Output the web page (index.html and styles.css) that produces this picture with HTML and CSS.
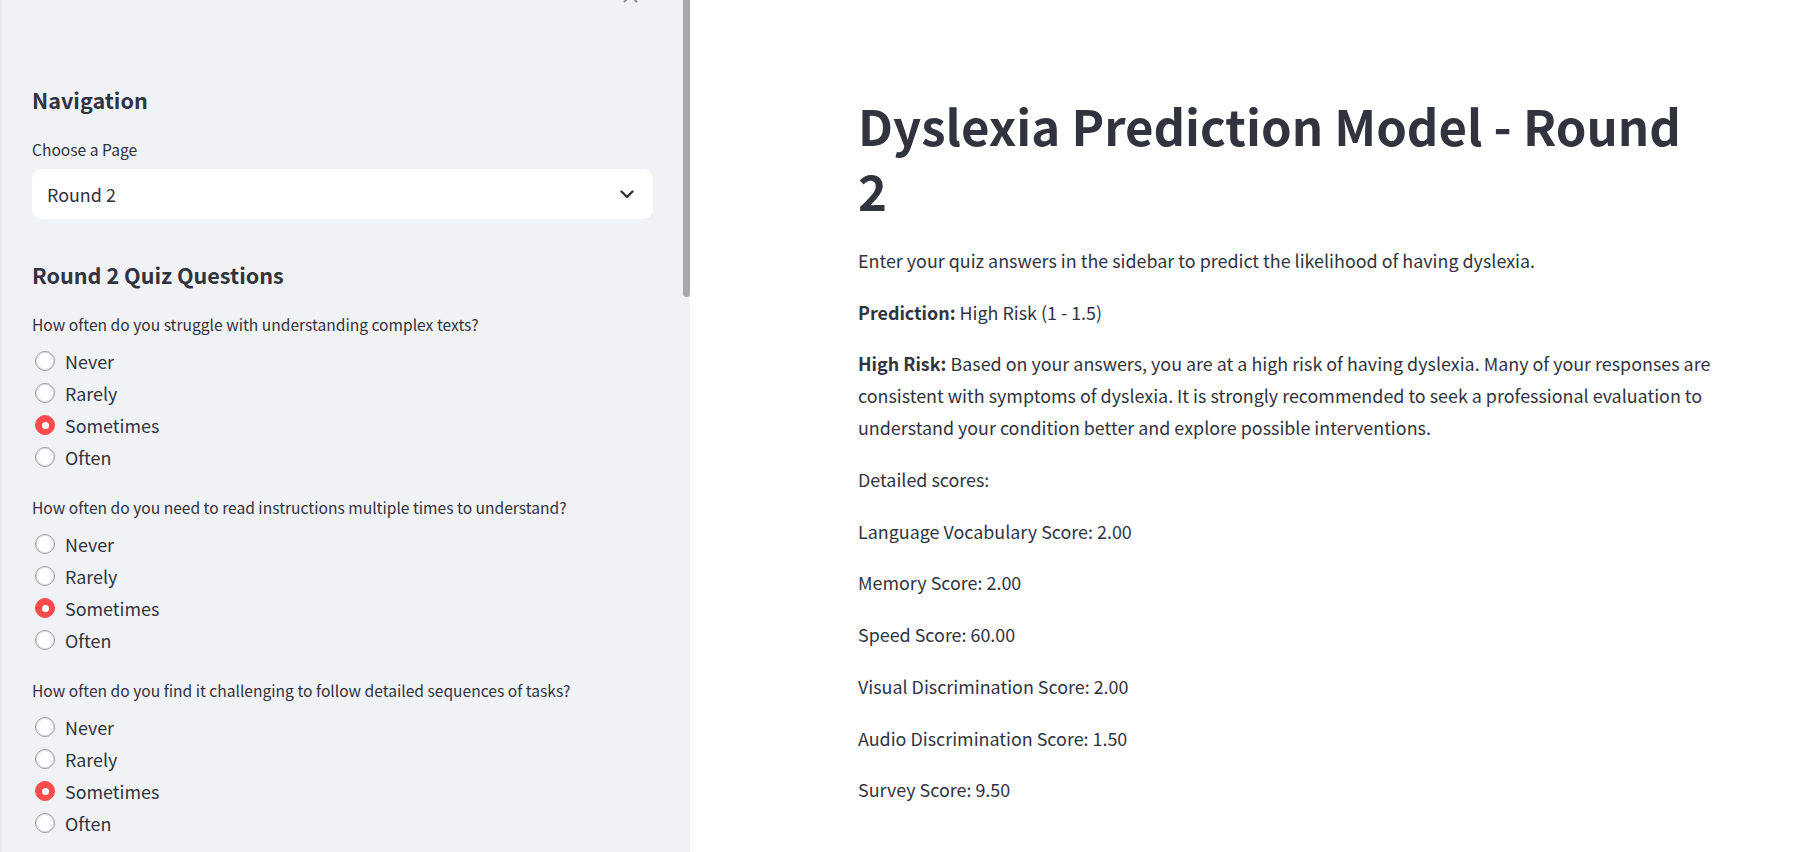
FILE: index.html
```html
<!DOCTYPE html>
<html lang="en">
<head>
<meta charset="utf-8">
<title>Dyslexia Prediction Model - Round 2</title>
<link rel="stylesheet" href="styles.css">
</head>
<body>
<div class="app">
  <aside class="sidebar">
    <svg class="close-icon" width="15" height="15" viewBox="0 0 15 15"><path d="M1.5 1.5 L13.5 13.5 M13.5 1.5 L1.5 13.5" stroke="#8e9099" stroke-width="2" stroke-linecap="round" fill="none"/></svg>
    <div class="scrollbar"></div>
    <div class="side-inner">
      <h2 class="side-heading">Navigation</h2>
      <div class="widget-label label-first">Choose a Page</div>
      <div class="select">
        <span class="select-value">Round 2</span>
        <svg class="chevron" width="14" height="9" viewBox="0 0 14 9"><path d="M1.5 1.5 L7 7 L12.5 1.5" stroke="#31333f" stroke-width="2.4" stroke-linecap="round" stroke-linejoin="round" fill="none"/></svg>
      </div>
      <h2 class="side-heading heading-quiz">Round 2 Quiz Questions</h2>

      <div class="question">
        <div class="widget-label">How often do you struggle with understanding complex texts?</div>
        <div class="radio-group">
          <div class="radio"><span class="dot"></span><span>Never</span></div>
          <div class="radio"><span class="dot"></span><span>Rarely</span></div>
          <div class="radio"><span class="dot checked"></span><span>Sometimes</span></div>
          <div class="radio"><span class="dot"></span><span>Often</span></div>
        </div>
      </div>

      <div class="question">
        <div class="widget-label">How often do you need to read instructions multiple times to understand?</div>
        <div class="radio-group">
          <div class="radio"><span class="dot"></span><span>Never</span></div>
          <div class="radio"><span class="dot"></span><span>Rarely</span></div>
          <div class="radio"><span class="dot checked"></span><span>Sometimes</span></div>
          <div class="radio"><span class="dot"></span><span>Often</span></div>
        </div>
      </div>

      <div class="question">
        <div class="widget-label">How often do you find it challenging to follow detailed sequences of tasks?</div>
        <div class="radio-group">
          <div class="radio"><span class="dot"></span><span>Never</span></div>
          <div class="radio"><span class="dot"></span><span>Rarely</span></div>
          <div class="radio"><span class="dot checked"></span><span>Sometimes</span></div>
          <div class="radio"><span class="dot"></span><span>Often</span></div>
        </div>
      </div>
    </div>
  </aside>

  <main class="main">
    <div class="content">
      <h1 class="title">Dyslexia Prediction Model - Round 2</h1>
      <p>Enter your quiz answers in the sidebar to predict the likelihood of having dyslexia.</p>
      <p><strong>Prediction:</strong> High Risk (1 - 1.5)</p>
      <p><strong>High Risk:</strong> Based on your answers, you are at a high risk of having dyslexia. Many of your responses are consistent with symptoms of dyslexia. It is strongly recommended to seek a professional evaluation to understand your condition better and explore possible interventions.</p>
      <p>Detailed scores:</p>
      <p>Language Vocabulary Score: 2.00</p>
      <p>Memory Score: 2.00</p>
      <p>Speed Score: 60.00</p>
      <p>Visual Discrimination Score: 2.00</p>
      <p>Audio Discrimination Score: 1.50</p>
      <p>Survey Score: 9.50</p>
    </div>
  </main>
</div>
</body>
</html>
```
FILE: styles.css
```css
html, body {
  margin: 0;
  padding: 0;
  height: 100%;
  overflow: hidden;
  background: #ffffff;
}

body {
  font-family: "Noto Sans CJK SC", "Source Sans Pro", sans-serif;
  color: #31333f;
}

.app {
  display: flex;
  height: 852px;
}

/* ---------- Sidebar ---------- */
.sidebar {
  position: relative;
  flex: 0 0 690px;
  width: 690px;
  height: 100%;
  background: #f0f2f6;
  box-shadow: inset 2px 0 0 #e6e8ec;
  overflow: hidden;
  box-sizing: border-box;
}

.close-icon {
  position: absolute;
  left: 623px;
  top: -12px;
}

.scrollbar {
  position: absolute;
  left: 683px;
  top: 0;
  width: 7px;
  height: 297px;
  background: #a6a8ae;
  border-radius: 0 0 4px 4px;
}

.side-inner {
  padding: 85px 37px 0 32px;
}

.side-heading {
  margin: 0;
  font-size: 21.6px;
  font-weight: 700;
  line-height: 30px;
  color: #31333f;
}

.heading-quiz {
  margin-top: 41px;
}

.widget-label {
  font-size: 15.6px;
  line-height: 22px;
  color: #31333f;
}

.label-first {
  margin-top: 23px;
}

.select {
  margin-top: 9px;
  height: 50px;
  background: #ffffff;
  border-radius: 10px;
  display: flex;
  align-items: center;
  justify-content: space-between;
  padding: 0 19px 0 15px;
}

.select-value {
  font-size: 17.9px;
  line-height: 24px;
}

.chevron {
  display: block;
}

.question {
  margin-top: 23px;
}

.radio-group {
  margin-top: 10px;
  display: flex;
  flex-direction: column;
}

.radio {
  height: 32px;
  display: flex;
  align-items: center;
  gap: 10px;
  padding-left: 3px;
  font-size: 17.9px;
}

.dot {
  position: relative;
  width: 20px;
  height: 20px;
  box-sizing: border-box;
  border-radius: 50%;
  background: #ffffff;
  border: 1px solid #9c9fa7;
  box-shadow: inset 0 0 0 1px #d9dbe0;
  flex: 0 0 20px;
}

.dot.checked {
  background: #ff4b4b;
  border-color: #ff4b4b;
  box-shadow: none;
}

.dot.checked::after {
  content: "";
  position: absolute;
  left: 50%;
  top: 50%;
  width: 7px;
  height: 7px;
  margin: -3.5px 0 0 -3.5px;
  border-radius: 50%;
  background: #ffffff;
}

/* ---------- Main ---------- */
.main {
  flex: 1 1 auto;
  height: 100%;
  overflow: hidden;
}

.content {
  margin-left: 168px;
  padding-top: 92px;
  width: 870px;
}

.title {
  margin: 0 0 22px 0;
  max-width: 840px;
  font-size: 49.1px;
  font-weight: 700;
  line-height: 65px;
  color: #31333f;
}

.content p {
  margin: 0 0 19.7px 0;
  font-size: 17.9px;
  line-height: 32px;
}

.content strong {
  font-weight: 700;
}
```
